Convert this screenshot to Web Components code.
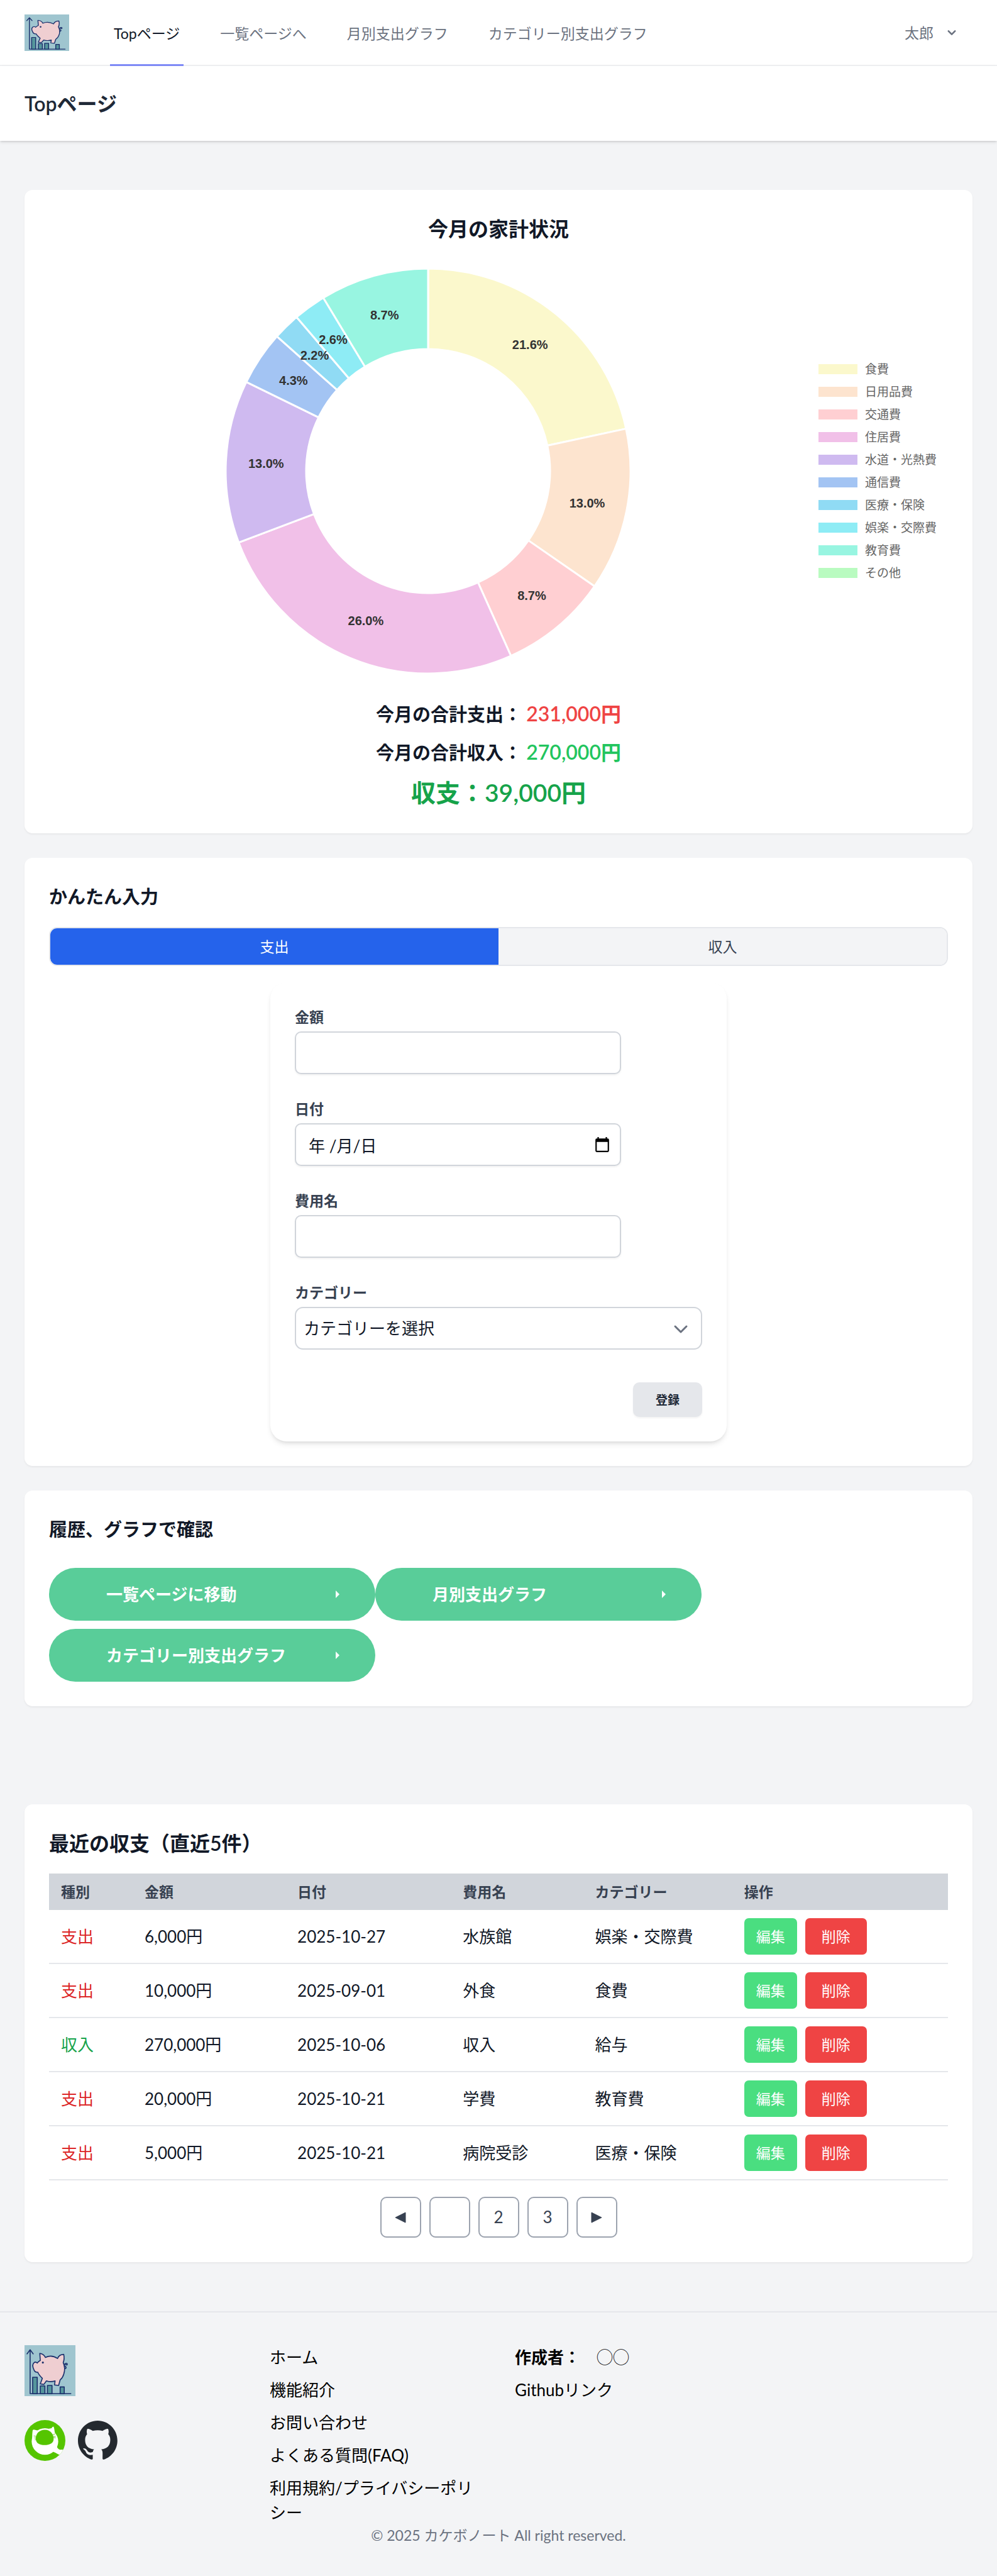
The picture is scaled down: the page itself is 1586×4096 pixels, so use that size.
<!DOCTYPE html>
<html lang="ja">
<head>
<meta charset="utf-8">
<meta name="viewport" content="width=device-width, initial-scale=1">
<title>Topページ</title>
<style>
  body {
    margin: 0;
    background: #f3f4f6;
    color: #111827;
    font: 26px/39px Lato, "Noto Sans CJK JP", sans-serif;
  }
  main {
    display: flex;
    flex-direction: column;
    gap: 39px;
    padding: 78px 39px;
  }
  .recent { margin-top: 117px; }
</style>
</head>
<body>
<kb-nav user="太郎">
  <kb-nav-link href="#top" current>Topページ</kb-nav-link>
  <kb-nav-link href="#list">一覧ページへ</kb-nav-link>
  <kb-nav-link href="#monthly">月別支出グラフ</kb-nav-link>
  <kb-nav-link href="#category">カテゴリー別支出グラフ</kb-nav-link>
</kb-nav>
<kb-page-title>Topページ</kb-page-title>
<main>
  <kb-card>
    <kb-heading large centered slot="heading">今月の家計状況</kb-heading>
    <kb-donut></kb-donut>
    <kb-summary></kb-summary>
  </kb-card>
  <kb-card>
    <kb-heading slot="heading">かんたん入力</kb-heading>
    <kb-quick-entry></kb-quick-entry>
  </kb-card>
  <kb-card>
    <kb-heading slot="heading">履歴、グラフで確認</kb-heading>
    <kb-pill-list>
      <kb-pill href="#list">一覧ページに移動</kb-pill>
      <kb-pill href="#monthly">月別支出グラフ</kb-pill>
      <kb-pill href="#category">カテゴリー別支出グラフ</kb-pill>
    </kb-pill-list>
  </kb-card>
  <kb-card class="recent">
    <kb-heading large slot="heading">最近の収支（直近5件）</kb-heading>
    <kb-records></kb-records>
    <kb-pager></kb-pager>
  </kb-card>
</main>
<kb-footer></kb-footer>

<script>
function define(name, html, setup) {
  const tpl = document.createElement('template');
  tpl.innerHTML = html;
  customElements.define(name, class extends HTMLElement {
    constructor() {
      super();
      this.attachShadow({ mode: 'open' }).append(tpl.content.cloneNode(true));
    }
    connectedCallback() {
      if (setup && !this.ready) { this.ready = true; setup(this, this.shadowRoot); }
    }
  });
}

define('kb-logo', `
<style>
  :host { display: block; width: 81px; height: 81px; }
  svg { display: block; width: 100%; height: 100%; }
</style>
<svg viewBox="0 0 100 100" preserveAspectRatio="none" role="img" aria-label="カケボノート">
  <rect width="100" height="100" fill="#9fc5cf"/>
  <g fill="none" stroke="#1b2f6b" stroke-width="2" stroke-linecap="round" stroke-linejoin="round">
    <path d="M11 95V9M5 17l6-8 6 8M11 95h80"/>
    <g fill="#55969c">
      <rect x="16" y="63" width="9" height="32"/><rect x="31" y="80" width="9" height="15"/>
      <rect x="45" y="79" width="9" height="16"/><rect x="70" y="82" width="8" height="13"/>
    </g>
    <path fill="#efced1" d="M30 16Q38 17 41 24Q53 18 65 26Q68 18 77 18Q79 27 76 34Q81 45 77 57Q75 64 70 68L67 79L59 78L60 70Q52 73 43 70L38 77L31 76L35 65Q28 58 26 53Q20 54 18 47Q14 38 19 34Q22 32 25 35Q27 32 31 30Z"/>
    <path d="M79 46q4 0 2-4q-4-1-2-5q4-3 5 0q0 3-3 1"/>
    <circle cx="36" cy="34" r="1" fill="#1b2f6b"/>
  </g>
</svg>`);

define('kb-nav', `
<style>
  :host { display: block; background: #fff; border-bottom: 2px solid #f0f1f3; }
  nav { display: flex; height: 103px; padding: 0 39px; align-items: center; }
  kb-logo { width: 71px; height: 58px; }
  .links { display: flex; gap: 52px; margin-left: 65px; align-self: stretch; }
  button {
    display: flex; align-items: center; gap: 16px; margin-left: auto; padding: 0 20px;
    border: 0; background: none; color: #6b7280; font: inherit; font-size: 23px; line-height: 32px;
  }
</style>
<nav>
  <a href="#top" aria-label="カケボノート"><kb-logo></kb-logo></a>
  <div class="links"><slot></slot></div>
  <button type="button"><span></span>
    <svg width="26" height="26" viewBox="0 0 20 20" fill="#6b7280" aria-hidden="true"><path fill-rule="evenodd" d="M5.293 7.293a1 1 0 011.414 0L10 10.586l3.293-3.293a1 1 0 111.414 1.414l-4 4a1 1 0 01-1.414 0l-4-4a1 1 0 010-1.414z"/></svg>
  </button>
</nav>`, (el, root) => { root.querySelector('button span').textContent = el.getAttribute('user'); });

define('kb-nav-link', `
<style>
  :host { display: flex; margin-bottom: -2px; }
  a {
    display: flex; align-items: center; padding: 3px 6px 0; border-bottom: 3px solid transparent;
    color: #6b7280; font-size: 23px; line-height: 32px; font-weight: 400; text-decoration: none; white-space: nowrap;
  }
  :host([current]) a { color: #111827; border-color: #818cf8; }
</style>
<a><slot></slot></a>`, (el, root) => { root.querySelector('a').href = el.getAttribute('href'); });

define('kb-page-title', `
<style>
  :host { display: block; position: relative; background: #fff; padding: 39px;
    box-shadow: 0 2px 5px rgb(0 0 0 / .1), 0 2px 3px -1px rgb(0 0 0 / .1); }
  h1 { margin: 0; font-size: 32px; line-height: 41px; font-weight: 600; color: #1f2937; }
</style>
<h1><slot></slot></h1>`);

define('kb-heading', `
<style>
  :host { display: block; }
  h2 { margin: 0; font-size: 29px; line-height: 45px; font-weight: 600; }
  :host([large]) h2 { font-size: 32px; }
  :host([centered]) { text-align: center; }
</style>
<h2><slot></slot></h2>`);

define('kb-card', `
<style>
  :host { display: block; background: #fff; border-radius: 13px; padding: 39px;
    box-shadow: 0 2px 3px rgb(0 0 0 / .05); }
</style>
<slot name="heading"></slot>
<slot></slot>`);

const expenses = [
  ['食費', 50000, '#fbf8cc'], ['日用品費', 30000, '#fde4cf'], ['交通費', 20000, '#ffcfd2'],
  ['住居費', 60000, '#f1c0e8'], ['水道・光熱費', 30000, '#cfbaf0'], ['通信費', 10000, '#a3c4f3'],
  ['医療・保険', 5000, '#90dbf4'], ['娯楽・交際費', 6000, '#8eecf5'], ['教育費', 20000, '#98f5e1'],
  ['その他', 0, '#b9fbc0']
];

define('kb-donut', `
<style>
  :host { display: flex; align-items: center; margin-top: 39px; }
  .chart { flex: 1; display: flex; justify-content: center; }
  svg { display: block; width: 648px; height: 648px; }
  path { stroke: #fff; stroke-width: 3; stroke-linejoin: bevel; }
  text { font: bold 20px "Liberation Sans", sans-serif; fill: #333; text-anchor: middle; dominant-baseline: central; }
  ul { box-sizing: border-box; width: 224px; margin: 0; padding: 0 0 0 18px; list-style: none;
    display: flex; flex-direction: column; gap: 16px; }
  li { display: flex; align-items: center; gap: 12px; color: #666; font-size: 19px; line-height: 20px; white-space: nowrap; }
  i { width: 62px; height: 16px; }
</style>
<div class="chart"><svg viewBox="-324 -324 648 648" role="img" aria-label="支出の内訳"></svg></div>
<ul></ul>`, (el, root) => {
  const total = expenses.reduce((sum, e) => sum + e[1], 0);
  const outer = 322, inner = 194, middle = 258;
  const at = (turn, r) => [r * Math.sin(turn * 2 * Math.PI), -r * Math.cos(turn * 2 * Math.PI)].map(n => n.toFixed(2)).join(' ');
  let start = 0, arcs = '', labels = '';
  for (const [, value, color] of expenses) {
    if (!value) continue;
    const share = value / total, end = start + share;
    arcs += `<path fill="${color}" d="M${at(start, outer)}A${outer} ${outer} 0 0 1 ${at(end, outer)}L${at(end, inner)}A${inner} ${inner} 0 0 0 ${at(start, inner)}Z"/>`;
    const [x, y] = at(start + share / 2, middle).split(' ');
    labels += `<text x="${x}" y="${y}">${(share * 100).toFixed(1)}%</text>`;
    start = end;
  }
  root.querySelector('svg').innerHTML = arcs + labels;
  root.querySelector('ul').innerHTML = expenses.map(([name, , color]) => `<li><i style="background:${color}"></i>${name}</li>`).join('');
});

define('kb-summary', `
<style>
  :host { display: flex; flex-direction: column; gap: 14px; margin-top: 39px; text-align: center; font-weight: 600; }
  p { margin: 0; font-size: 29px; line-height: 46px; }
  span { font-size: 32px; }
  .out { color: #ef4444; }
  .in { color: #22c55e; }
  .balance { color: #16a34a; font-size: 39px; line-height: 52px; }
</style>
<p>今月の合計支出： <span class="out">231,000円</span></p>
<p>今月の合計収入： <span class="in">270,000円</span></p>
<p class="balance">収支：39,000円</p>`);

define('kb-field', `
<style>
  :host { display: block; }
  label { display: block; margin-bottom: 7px; color: #374151; font-size: 23px; line-height: 32px; font-weight: 600; }
  .box { display: grid; align-items: center; width: 519px; max-width: 100%; }
  .box > * { grid-area: 1 / 1; }
  input, select {
    box-sizing: border-box; width: 100%; height: 68px; border: 2px solid #d1d5db; border-radius: 10px;
    background: #fff; color: #111827; font: inherit; line-height: 39px; padding: 0 20px;
    box-shadow: 0 2px 3px rgb(0 0 0 / .05);
  }
  select { appearance: none; border-radius: 13px; padding: 0 12px; box-shadow: none; }
  svg { justify-self: end; margin-right: 17px; pointer-events: none; }
  .chevron { margin-right: 19px; }
  :host([kind=select]) .box { width: 100%; }
</style>
<label for="control"></label>
<div class="box"></div>`, (el, root) => {
  root.querySelector('label').textContent = el.getAttribute('label');
  const value = el.getAttribute('value') || '';
  const kinds = {
    text: '<input id="control" type="text">',
    date: `<input id="control" type="text" inputmode="numeric" value="${value}">
      <svg width="26" height="26" viewBox="0 0 24 24" aria-hidden="true"><path d="M20 3h-1V1h-2v2H7V1H5v2H4a2 2 0 0 0-2 2v16a2 2 0 0 0 2 2h16a2 2 0 0 0 2-2V5a2 2 0 0 0-2-2zm0 18H4V8h16z"/></svg>`,
    select: `<select id="control"><option>${value}</option></select>
      <svg class="chevron" width="30" height="30" viewBox="0 0 20 20" fill="none" stroke="#6b7280" stroke-width="2" stroke-linecap="round" stroke-linejoin="round" aria-hidden="true"><path d="M4 8l6 6 6-6"/></svg>`
  };
  root.querySelector('.box').innerHTML = kinds[el.getAttribute('kind') || 'text'];
});

define('kb-quick-entry', `
<style>
  :host { display: block; margin-top: 26px; }
  .tabs { display: flex; border: 2px solid #e5e7eb; border-radius: 13px; overflow: hidden; }
  .tabs button { flex: 1; height: 58px; border: 0; background: #f3f4f6; color: #374151; font: inherit; font-size: 23px; line-height: 32px; }
  .tabs button[aria-selected=true] { background: #2563eb; color: #fff; }
  form {
    box-sizing: border-box; max-width: 726px; margin: 26px auto 0; padding: 39px; border-radius: 26px; background: #fff;
    display: flex; flex-direction: column; gap: 39px;
    box-shadow: 0 6px 10px -2px rgb(0 0 0 / .1), 0 3px 6px -3px rgb(0 0 0 / .1);
  }
  .submit {
    align-self: flex-end; margin-top: 13px; height: 55px; padding: 0 36px; border: 0; border-radius: 10px;
    background: #e5e7eb; color: #1f2937; font: inherit; font-size: 19px; line-height: 26px; font-weight: 600;
    box-shadow: 0 2px 3px rgb(0 0 0 / .05);
  }
</style>
<div class="tabs" role="tablist">
  <button type="button" role="tab" aria-selected="true">支出</button>
  <button type="button" role="tab" aria-selected="false">収入</button>
</div>
<form>
  <kb-field label="金額"></kb-field>
  <kb-field label="日付" kind="date" value="年 /月/日"></kb-field>
  <kb-field label="費用名"></kb-field>
  <kb-field label="カテゴリー" kind="select" value="カテゴリーを選択"></kb-field>
  <button class="submit" type="submit">登録</button>
</form>`);

define('kb-pill-list', `
<style>
  :host { display: flex; flex-wrap: wrap; row-gap: 13px; margin-top: 39px; max-width: 1300px; }
</style>
<slot></slot>`);

define('kb-pill', `
<style>
  :host { display: block; width: 519px; }
  a {
    box-sizing: border-box; display: flex; align-items: center; justify-content: space-between; height: 84px;
    padding: 0 57px 0 91px; border-radius: 42px; background: #59cd99; color: #fff; font-weight: 600; text-decoration: none; white-space: nowrap;
  }
  i { border: solid transparent; border-width: 6px 0 6px 6px; border-left-color: #fff; }
</style>
<a><slot></slot><i></i></a>`, (el, root) => { root.querySelector('a').href = el.getAttribute('href'); });

define('kb-records', `
<style>
  :host { display: block; margin-top: 26px; }
  table { width: 100%; table-layout: fixed; border-collapse: separate; border-spacing: 0; }
  th { height: 58px; padding: 0 19px; background: #d1d5db; color: #374151; font-size: 23px; line-height: 32px; font-weight: 600; text-align: left; }
  td { height: 84px; padding: 0 19px; border-bottom: 2px solid #e5e7eb; white-space: nowrap; }
  .out { color: #dc2626; }
  .in { color: #16a34a; }
  .actions { display: flex; gap: 13px; }
  a, button { box-sizing: border-box; height: 58px; border: 0; border-radius: 7px; color: #fff; font: inherit; font-size: 23px; line-height: 58px; text-decoration: none; }
  a { padding: 0 19px; background: #4ade80; }
  button { padding: 0 26px; background: #ef4444; }
</style>
<table>
  <colgroup><col style="width:9.3%"><col style="width:17%"><col style="width:18.4%"><col style="width:14.7%"><col style="width:16.6%"><col></colgroup>
  <thead><tr><th>種別</th><th>金額</th><th>日付</th><th>費用名</th><th>カテゴリー</th><th>操作</th></tr></thead>
  <tbody></tbody>
</table>`, (el, root) => {
  root.querySelector('tbody').innerHTML = [
    ['支出', '6,000円', '2025-10-27', '水族館', '娯楽・交際費'],
    ['支出', '10,000円', '2025-09-01', '外食', '食費'],
    ['収入', '270,000円', '2025-10-06', '収入', '給与'],
    ['支出', '20,000円', '2025-10-21', '学費', '教育費'],
    ['支出', '5,000円', '2025-10-21', '病院受診', '医療・保険']
  ].map(([kind, ...rest]) => `<tr><td class="${kind === '支出' ? 'out' : 'in'}">${kind}</td>${rest.map(c => `<td>${c}</td>`).join('')}
    <td><div class="actions"><a href="#edit">編集</a><button type="button">削除</button></div></td></tr>`).join('');
});

define('kb-pager', `
<style>
  :host { display: block; margin-top: 26px; }
  nav { display: flex; justify-content: center; gap: 13px; }
  a { box-sizing: border-box; width: 65px; height: 65px; border: 2px solid #9ca3af; border-radius: 10px;
    display: flex; align-items: center; justify-content: center; color: #374151; text-decoration: none; }
</style>
<nav aria-label="ページ">
  <a href="#prev" aria-label="前へ"><svg width="18" height="18" viewBox="0 0 18 18" fill="#374151"><path d="M17 1v16L1 9z" stroke="#374151" stroke-linejoin="round"/></svg></a>
  <a href="#p1" aria-label="1ページ" aria-current="page"></a>
  <a href="#p2">2</a>
  <a href="#p3">3</a>
  <a href="#next" aria-label="次へ"><svg width="18" height="18" viewBox="0 0 18 18" fill="#374151"><path d="M1 1v16L17 9z" stroke="#374151" stroke-linejoin="round"/></svg></a>
</nav>`);

define('kb-footer', `
<style>
  :host { display: block; border-top: 2px solid #e5e7eb; padding: 52px 39px 51px; color: #000; }
  .grid { display: grid; grid-template-columns: repeat(4, 1fr); gap: 52px; }
  ul { margin: 0; padding: 0; list-style: none; display: flex; flex-direction: column; gap: 13px; }
  a { color: inherit; text-decoration: none; }
  .social { display: flex; align-items: center; gap: 20px; margin-top: 38px; }
  .social a, .social svg { display: block; }
  p { margin: 0; text-align: center; color: #6b7280; font-size: 23px; line-height: 32px; }
</style>
<div class="grid">
  <div>
    <kb-logo></kb-logo>
    <div class="social">
      <a href="#qiita" aria-label="Qiita"><svg width="65" height="65" viewBox="0 0 80 80">
        <clipPath id="disc"><circle cx="40" cy="40" r="40"/></clipPath>
        <circle cx="40" cy="40" r="40" fill="#55c500"/>
        <g clip-path="url(#disc)" fill="#fff">
          <circle cx="40" cy="42" r="26"/>
          <path d="M15 38Q15 24 16 20Q17 18 20 19L27 21L53 16Q54 13 57 13L58 16L60 29L64 38Z"/>
          <path d="M62 50Q66 58 70 58Q76 57 80 60L73 70L66 67Q60 63 56 62Z"/>
        </g>
        <path fill="#55c500" d="M40 19C51 19 57 28 57 37C57 46 49 49 39 49C30 49 22 46 22 36C22 26 30 19 40 19Z"/>
        <path fill="none" stroke="#55c500" d="M18 31l5 1M19 35h4M20 39l4-2M55 29l5-2M56 32h5M56 34l5 1"/>
      </svg></a>
      <a href="#github" aria-label="GitHub"><svg width="63" height="63" viewBox="0 0 98 98" fill="#24292f"><path fill-rule="evenodd" d="M48.854 0C21.839 0 0 22 0 49.217c0 21.756 13.993 40.172 33.405 46.69 2.427.49 3.316-1.059 3.316-2.362 0-1.141-.08-5.052-.08-9.127-13.59 2.934-16.42-5.867-16.42-5.867-2.184-5.704-5.42-7.17-5.42-7.17-4.448-3.015.324-3.015.324-3.015 4.934.326 7.523 5.052 7.523 5.052 4.367 7.496 11.404 5.378 14.235 4.074.404-3.178 1.699-5.378 3.074-6.6-10.839-1.141-22.243-5.378-22.243-24.283 0-5.378 1.94-9.778 5.014-13.2-.485-1.222-2.184-6.275.486-13.038 0 0 4.125-1.304 13.426 5.052a46.97 46.97 0 0 1 12.214-1.63c4.125 0 8.33.571 12.213 1.63 9.302-6.356 13.427-5.052 13.427-5.052 2.67 6.763.97 11.816.485 13.038 3.155 3.422 5.015 7.822 5.015 13.2 0 18.905-11.404 23.06-22.324 24.283 1.78 1.548 3.316 4.481 3.316 9.126 0 6.6-.08 11.897-.08 13.526 0 1.304.89 2.853 3.316 2.364 19.412-6.52 33.405-24.935 33.405-46.691C97.707 22 75.788 0 48.854 0z"/></svg></a>
    </div>
  </div>
  <ul>
    <li><a href="#home">ホーム</a></li>
    <li><a href="#features">機能紹介</a></li>
    <li><a href="#contact">お問い合わせ</a></li>
    <li><a href="#faq">よくある質問(FAQ)</a></li>
    <li><a href="#terms">利用規約/プライバシーポリシー</a></li>
  </ul>
  <ul>
    <li><b>作成者：</b>　◯◯</li>
    <li><a href="#repo">Githubリンク</a></li>
  </ul>
</div>
<p>© 2025 カケボノート All right reserved.</p>`);
</script>
</body>
</html>
